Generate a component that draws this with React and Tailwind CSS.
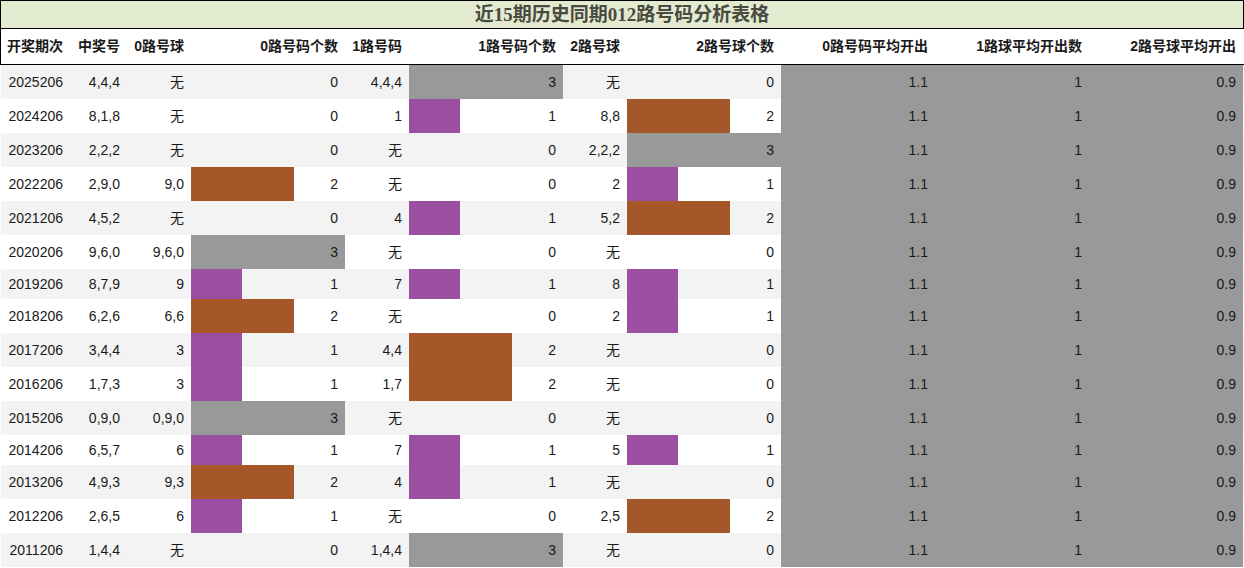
const ROWS = [
  ['2025206', '4,4,4', '无', 0, '4,4,4', 3, '无', 0],
  ['2024206', '8,1,8', '无', 0, '1', 1, '8,8', 2],
  ['2023206', '2,2,2', '无', 0, '无', 0, '2,2,2', 3],
  ['2022206', '2,9,0', '9,0', 2, '无', 0, '2', 1],
  ['2021206', '4,5,2', '无', 0, '4', 1, '5,2', 2],
  ['2020206', '9,6,0', '9,6,0', 3, '无', 0, '无', 0],
  ['2019206', '8,7,9', '9', 1, '7', 1, '8', 1],
  ['2018206', '6,2,6', '6,6', 2, '无', 0, '2', 1],
  ['2017206', '3,4,4', '3', 1, '4,4', 2, '无', 0],
  ['2016206', '1,7,3', '3', 1, '1,7', 2, '无', 0],
  ['2015206', '0,9,0', '0,9,0', 3, '无', 0, '无', 0],
  ['2014206', '6,5,7', '6', 1, '7', 1, '5', 1],
  ['2013206', '4,9,3', '9,3', 2, '4', 1, '无', 0],
  ['2012206', '2,6,5', '6', 1, '无', 0, '2,5', 2],
  ['2011206', '1,4,4', '无', 0, '1,4,4', 3, '无', 0],
]

const HEADERS = [
  '开奖期次', '中奖号', '0路号球', '0路号码个数', '1路号码', '1路号码个数',
  '2路号球', '2路号球个数', '0路号码平均开出', '1路球平均开出数', '2路号球平均开出',
]

const GRID =
  'grid grid-cols-[70px_57px_64px_154px_64px_154px_64px_154px_154px_154px_154px]'

const BAR_COLORS = {
  1: 'bg-[#9b4fa1]',
  2: 'bg-[#a5572a]',
  3: 'bg-[#999999]',
}

function Cell({ children, className = '' }) {
  return (
    <div className={`flex items-center justify-end pr-[7px] ${className}`}>
      {children}
    </div>
  )
}

function BarCell({ value }) {
  return (
    <div className="relative flex items-center justify-end pr-[7px]">
      {value > 0 && (
        <div
          className={`absolute inset-y-0 left-0 ${BAR_COLORS[value]}`}
          style={{ width: `${(value / 3) * 154}px` }}
        />
      )}
      <span className="relative">{value}</span>
    </div>
  )
}

export default function App() {
  return (
    <div
      className="w-[1244px] h-[568px] bg-white text-[14px] text-[#1a1a1a] overflow-hidden"
      style={{ fontFamily: '"Liberation Sans", "Noto Sans CJK SC", sans-serif' }}
    >
      <div className="h-[29px] border border-black bg-[#e2ebd0] flex items-center justify-center">
        <span
          className="text-[19px] font-bold text-[#4a4a40] leading-none"
          style={{ fontFamily: '"Liberation Serif", "Noto Sans CJK SC", serif' }}
        >
          近15期历史同期012路号码分析表格
        </span>
      </div>

      <div className={`${GRID} h-[36px] border-b border-black shadow-[inset_1px_0_0_#000] font-bold`}>
        {HEADERS.map((h) => (
          <Cell key={h}>{h}</Cell>
        ))}
      </div>

      {ROWS.map((r, i) => {
        const tall = r.includes('无')
        return (
          <div
            key={r[0]}
            className={`${GRID} ${tall ? 'h-[34px]' : 'h-[30px]'} ${i % 2 === 0 ? 'bg-[#f3f3f3]' : 'bg-white'} shadow-[inset_1px_0_0_#fff]`}
          >
            <Cell>{r[0]}</Cell>
            <Cell>{r[1]}</Cell>
            <Cell>{r[2]}</Cell>
            <BarCell value={r[3]} />
            <Cell>{r[4]}</Cell>
            <BarCell value={r[5]} />
            <Cell>{r[6]}</Cell>
            <BarCell value={r[7]} />
            <Cell className="bg-[#999999]">1.1</Cell>
            <Cell className="bg-[#999999]">1</Cell>
            <Cell className="bg-[#999999]">0.9</Cell>
          </div>
        )
      })}
    </div>
  )
}
